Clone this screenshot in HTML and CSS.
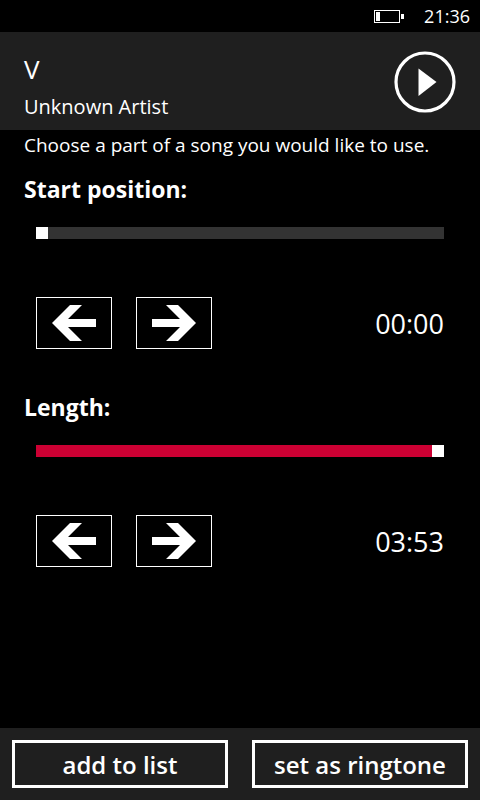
FILE: index.html
```
<!DOCTYPE html>
<html lang="en">
<head>
    <meta charset="UTF-8">
    <meta name="viewport" content="width=device-width, initial-scale=1.0">
    <title>Ringtone Maker</title>
    <link rel="stylesheet" href="styles.css">
</head>
<body>
    <div class="status-bar">
        <svg class="battery" width="30" height="13" viewBox="0 0 30 13" aria-hidden="true">
            <rect x="0.5" y="0.5" width="25" height="12" fill="none" stroke="#fff"/>
            <rect x="2" y="2" width="4" height="9" fill="#fff"/>
            <rect x="27" y="4" width="3" height="5" fill="#fff"/>
        </svg>
        <time>21:36</time>
    </div>

    <header class="song">
        <div class="song-info">
            <h1>V</h1>
            <p>Unknown Artist</p>
        </div>
        <button type="button" class="play-btn" aria-label="Play">
            <svg width="62" height="62" viewBox="0 0 62 62">
                <circle cx="31" cy="31" r="29" fill="none" stroke="#fff" stroke-width="3.2"/>
                <path d="M24.5 17.5 L42.5 31 L24.5 45 Z" fill="#fff"/>
            </svg>
        </button>
    </header>

    <main class="content">
        <p class="hint">Choose a part of a song you would like to use.</p>

        <section class="setting">
            <label for="start">Start position:</label>
            <input type="range" class="slider" id="start" min="0" max="233" value="0">
            <div class="controls">
                <button type="button" class="step-btn" data-target="start" data-step="-1" aria-label="Start earlier">
                    <svg width="44" height="36" viewBox="0 0 44 36"><path d="M0 18 L18 0 H30 L16 14 H44 V22 H16 L30 36 H18 Z" fill="#fff"/></svg>
                </button>
                <button type="button" class="step-btn" data-target="start" data-step="1" aria-label="Start later">
                    <svg width="44" height="36" viewBox="0 0 44 36"><path d="M44 18 L26 0 H14 L28 14 H0 V22 H28 L14 36 H26 Z" fill="#fff"/></svg>
                </button>
                <output class="time" for="start">00:00</output>
            </div>
        </section>

        <section class="setting">
            <label for="length">Length:</label>
            <input type="range" class="slider slider-full" id="length" min="0" max="233" value="233">
            <div class="controls">
                <button type="button" class="step-btn" data-target="length" data-step="-1" aria-label="Shorter">
                    <svg width="44" height="36" viewBox="0 0 44 36"><path d="M0 18 L18 0 H30 L16 14 H44 V22 H16 L30 36 H18 Z" fill="#fff"/></svg>
                </button>
                <button type="button" class="step-btn" data-target="length" data-step="1" aria-label="Longer">
                    <svg width="44" height="36" viewBox="0 0 44 36"><path d="M44 18 L26 0 H14 L28 14 H0 V22 H28 L14 36 H26 Z" fill="#fff"/></svg>
                </button>
                <output class="time" for="length">03:53</output>
            </div>
        </section>
    </main>

    <footer class="actions">
        <button type="button" class="action-btn">add to list</button>
        <button type="button" class="action-btn">set as ringtone</button>
    </footer>

    <script>
        function formatTime(seconds) {
            const min = String(Math.floor(seconds / 60)).padStart(2, '0');
            const sec = String(seconds % 60).padStart(2, '0');
            return min + ':' + sec;
        }

        // Repaint the red part of the track and the time next to it
        function updateSlider(slider) {
            slider.style.setProperty('--fill', (slider.value / slider.max * 100) + '%');
            document.querySelector('output[for="' + slider.id + '"]').textContent = formatTime(Number(slider.value));
        }

        document.querySelectorAll('.slider').forEach(function(slider) {
            slider.addEventListener('input', function() {
                updateSlider(slider);
            });
            updateSlider(slider);
        });

        document.querySelectorAll('.step-btn').forEach(function(btn) {
            btn.addEventListener('click', function() {
                const slider = document.getElementById(btn.dataset.target);
                slider.value = Number(slider.value) + Number(btn.dataset.step);
                updateSlider(slider);
            });
        });
    </script>
</body>
</html>
```
FILE: styles.css
```
* {
    margin: 0;
    padding: 0;
    box-sizing: border-box;
}

body {
    font-family: 'Open Sans', 'Noto Sans', sans-serif;
    background: #000000;
    color: #ffffff;
    min-height: 100vh;
    display: flex;
    flex-direction: column;
}

button {
    font-family: inherit;
    color: inherit;
    background: transparent;
    border: none;
    border-radius: 0;
    cursor: pointer;
}

svg {
    display: block;
}

.status-bar {
    display: flex;
    align-items: center;
    justify-content: flex-end;
    gap: 20px;
    height: 32px;
    padding: 0 10px;
    font-size: 18px;
}

.song {
    display: flex;
    align-items: flex-start;
    justify-content: space-between;
    padding: 19px 24px 3px;
    background: #1f1f1f;
}

.song h1 {
    font-size: 26px;
    font-weight: 400;
    line-height: 36px;
}

.song p {
    font-size: 20px;
    line-height: 40px;
}

.content {
    flex: 1;
    padding: 0 24px;
}

.hint {
    font-size: 19px;
    line-height: 31px;
}

.setting {
    padding: 12px 12px 30px;
}

.setting label {
    display: block;
    margin-left: -12px;
    font-size: 23px;
    font-weight: 700;
    line-height: 32px;
}

.slider {
    --fill: 0%;
    -webkit-appearance: none;
    appearance: none;
    display: block;
    width: 100%;
    height: 12px;
    margin: 22px 0 58px;
    background: linear-gradient(to right, #cc0033 var(--fill), #333333 var(--fill));
    cursor: pointer;
}

.slider-full {
    --fill: 100%;
}

.slider::-webkit-slider-thumb {
    -webkit-appearance: none;
    width: 12px;
    height: 12px;
    background: #ffffff;
}

.slider::-moz-range-thumb {
    width: 12px;
    height: 12px;
    border: none;
    border-radius: 0;
    background: #ffffff;
}

.controls {
    display: flex;
    align-items: center;
    gap: 24px;
}

.step-btn {
    display: flex;
    align-items: center;
    justify-content: center;
    width: 76px;
    height: 52px;
    border: 1px solid #ffffff;
}

.step-btn:active,
.action-btn:active {
    background: #cc0033;
}

.time {
    margin-left: auto;
    font-size: 27px;
}

.actions {
    display: grid;
    grid-template-columns: 1fr 1fr;
    gap: 24px;
    padding: 12px;
    background: #1f1f1f;
}

.action-btn {
    height: 48px;
    border: 3px solid #ffffff;
    font-size: 24px;
    font-weight: 600;
}
```
